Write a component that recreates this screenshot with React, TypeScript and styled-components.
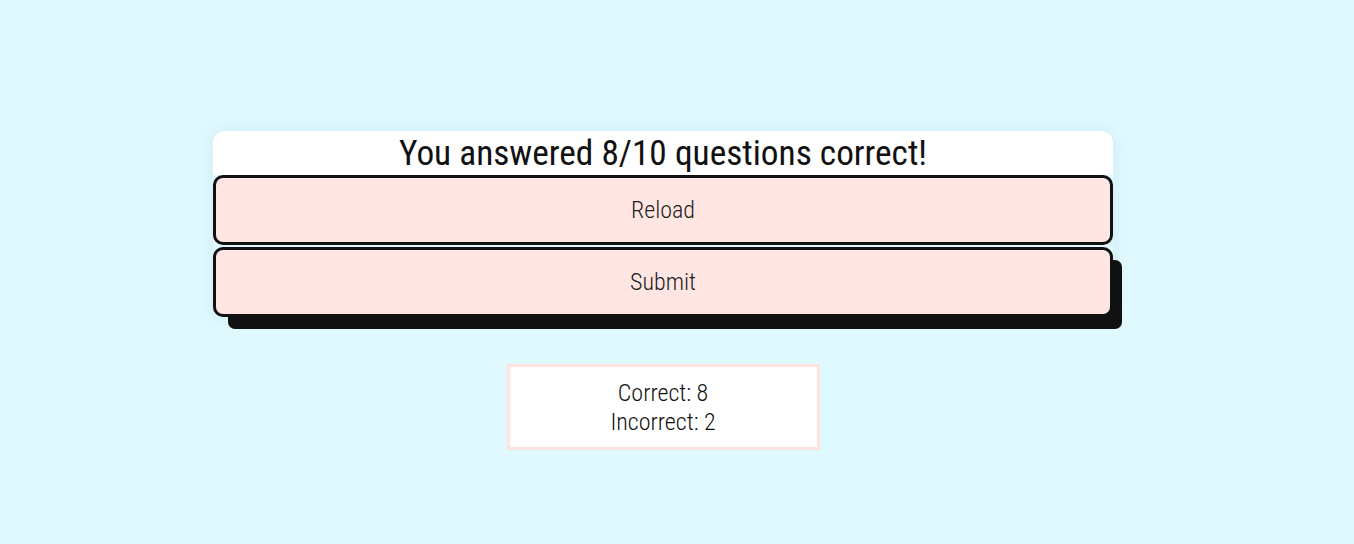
import React from "react";
import styled, { createGlobalStyle } from "styled-components";

const Global = createGlobalStyle`
  html, body { margin: 0; padding: 0; }
  body {
    background: #e0f9ff;
    font-family: "Roboto Condensed", Roboto, "Liberation Sans", sans-serif;
    font-stretch: condensed;
    color: #111;
  }
`;

const Page = styled.div`
  width: 1326px;
  height: 544px;
  display: flex;
  flex-direction: column;
  align-items: center;
  padding-top: 131px;
  box-sizing: border-box;
`;

const Card = styled.div`
  width: 900px;
  display: flex;
  flex-direction: column;
  border-radius: 12px;
  box-shadow: 0 0 16px rgba(120, 170, 180, 0.18);
`;

const Title = styled.h1`
  margin: 0;
  background: #fff;
  border-radius: 12px 12px 0 0;
  font-size: 35.3px;
  font-weight: 400;
  line-height: 44px;
  text-align: center;
`;

const Button = styled.button<{ $raised?: boolean }>`
  height: 70px;
  margin-bottom: ${(p) => (p.$raised ? 0 : "2px")};
  border: 3px solid #111;
  border-radius: 10px;
  background: #ffe6e2;
  font-family: inherit;
  font-stretch: condensed;
  font-size: 24px;
  font-weight: 300;
  color: #222;
  cursor: pointer;
  box-shadow: ${(p) =>
    p.$raised
      ? "12px 10px 0 -3px #111, 12px 15px 0 -3px #111"
      : "none"};
`;

const Results = styled.div`
  margin-top: 47px;
  width: 307px;
  box-sizing: content-box;
  padding: 12px 0 10px;
  border: 3px solid #ffe3df;
  background: #fff;
  text-align: center;
  font-size: 24px;
  font-weight: 300;
  line-height: 29px;
`;

export default function App() {
  return (
    <>
      <Global />
      <Page>
        <Card>
          <Title>You answered 8/10 questions correct!</Title>
          <Button>Reload</Button>
          <Button $raised>Submit</Button>
        </Card>
        <Results>
          <div>Correct: 8</div>
          <div>Incorrect: 2</div>
        </Results>
      </Page>
    </>
  );
}
